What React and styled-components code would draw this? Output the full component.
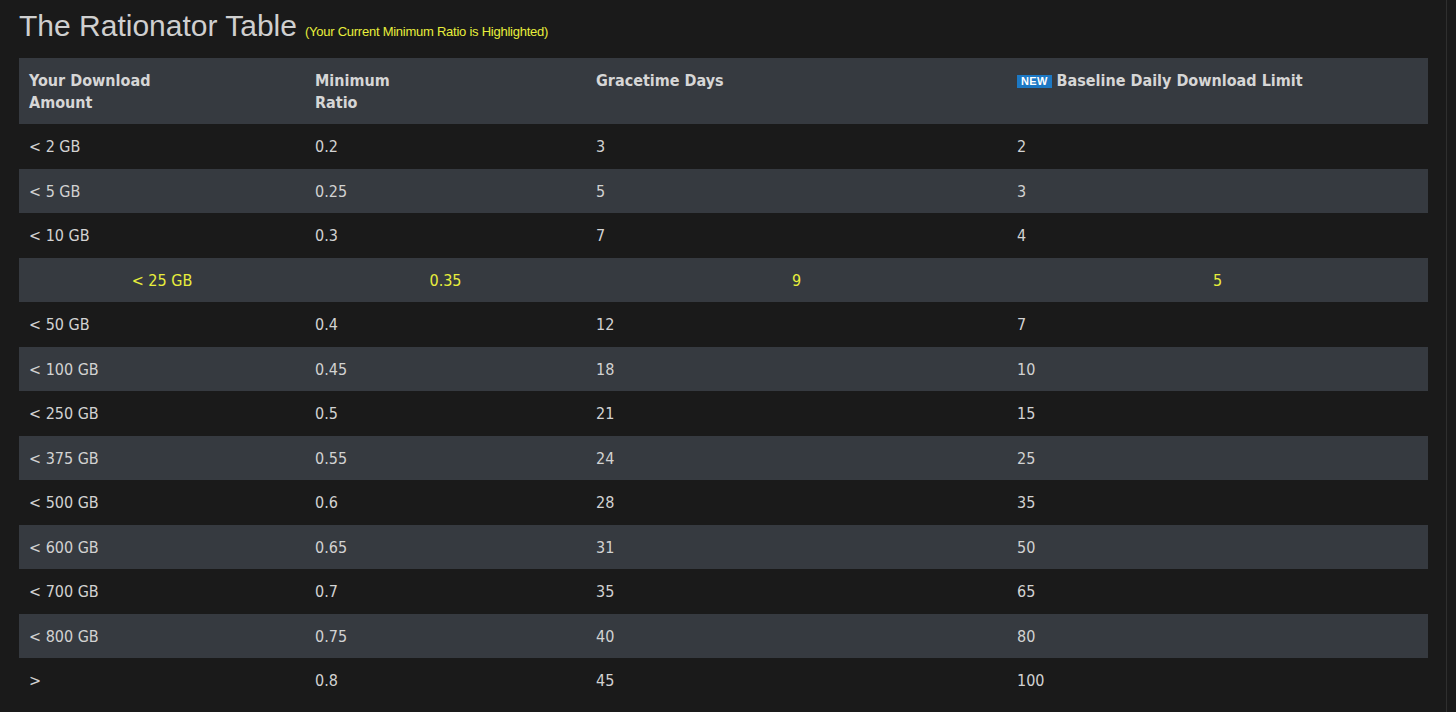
import React from "react";
import styled, { createGlobalStyle } from "styled-components";

const GlobalStyle = createGlobalStyle`
  html, body {
    margin: 0;
    padding: 0;
    background: #1a1a1a;
  }
`;

// page wrapper, the right edge line is the panel border
const Page = styled.div`
  width: 1447px;
  min-height: 712px;
  box-sizing: border-box;
  border-right: 1px solid #2f2f2f;
  padding: 9px 19px 0 19px;
  background: #1a1a1a;
`;

const Heading = styled.h1`
  margin: 0 0 15px 0;
  font-family: "Liberation Sans", Arial, sans-serif;
  font-weight: 400;
  font-size: 30px;
  line-height: 34px;
  color: #cfcfcf;
  white-space: nowrap;
`;

const Note = styled.span`
  margin-left: 8px;
  font-size: 13px;
  line-height: 13px;
  letter-spacing: -0.25px;
  color: #e8ee3c;
`;

const Table = styled.div`
  width: 1409px;
  display: flex;
  flex-direction: column;
  font-family: "DejaVu Sans Condensed", "DejaVu Sans", sans-serif;
`;

const Row = styled.div`
  display: grid;
  grid-template-columns: 286px 281px 421px 421px;
  align-items: center;
  height: ${({ $tall }) => ($tall ? "66px" : "44.5px")};
  background: ${({ $shaded }) => ($shaded ? "#363a40" : "transparent")};
`;

const HeadCell = styled.div`
  align-self: start;
  padding: 12px 10px 0 10px;
  font-weight: 700;
  font-size: 16px;
  line-height: 22px;
  color: #d6d6d6;
  display: flex;
  align-items: center;
  gap: 5px;
`;

const Cell = styled.div`
  padding: 1px 10px 0 10px;
  font-size: 16px;
  color: ${({ $hl }) => ($hl ? "#e8ee3c" : "#d2d2d2")};
  text-align: ${({ $hl }) => ($hl ? "center" : "left")};
`;

const NewBadge = styled.span`
  display: inline-block;
  background: #1c78c4;
  color: #ffffff;
  font-family: "Liberation Sans", Arial, sans-serif;
  font-weight: 700;
  font-size: 11px;
  line-height: 13px;
  padding: 0 4px;
  letter-spacing: 0.3px;
`;

const rows = [
  ["< 2 GB", "0.2", "3", "2"],
  ["< 5 GB", "0.25", "5", "3"],
  ["< 10 GB", "0.3", "7", "4"],
  ["< 25 GB", "0.35", "9", "5"],
  ["< 50 GB", "0.4", "12", "7"],
  ["< 100 GB", "0.45", "18", "10"],
  ["< 250 GB", "0.5", "21", "15"],
  ["< 375 GB", "0.55", "24", "25"],
  ["< 500 GB", "0.6", "28", "35"],
  ["< 600 GB", "0.65", "31", "50"],
  ["< 700 GB", "0.7", "35", "65"],
  ["< 800 GB", "0.75", "40", "80"],
  [">", "0.8", "45", "100"],
];

const current = 3; // index of the user's bracket

export default function App() {
  return (
    <>
      <GlobalStyle />
      <Page>
        <Heading>
          The Rationator Table
          <Note>(Your Current Minimum Ratio is Highlighted)</Note>
        </Heading>
        <Table>
          <Row $tall $shaded>
            <HeadCell>
              Your Download
              <br />
              Amount
            </HeadCell>
            <HeadCell>
              Minimum
              <br />
              Ratio
            </HeadCell>
            <HeadCell>Gracetime Days</HeadCell>
            <HeadCell>
              <NewBadge>NEW</NewBadge>
              Baseline Daily Download Limit
            </HeadCell>
          </Row>
          {rows.map((r, i) => (
            <Row key={i} $shaded={i % 2 === 1}>
              {r.map((v, j) => (
                <Cell key={j} $hl={i === current}>
                  {v}
                </Cell>
              ))}
            </Row>
          ))}
        </Table>
      </Page>
    </>
  );
}
